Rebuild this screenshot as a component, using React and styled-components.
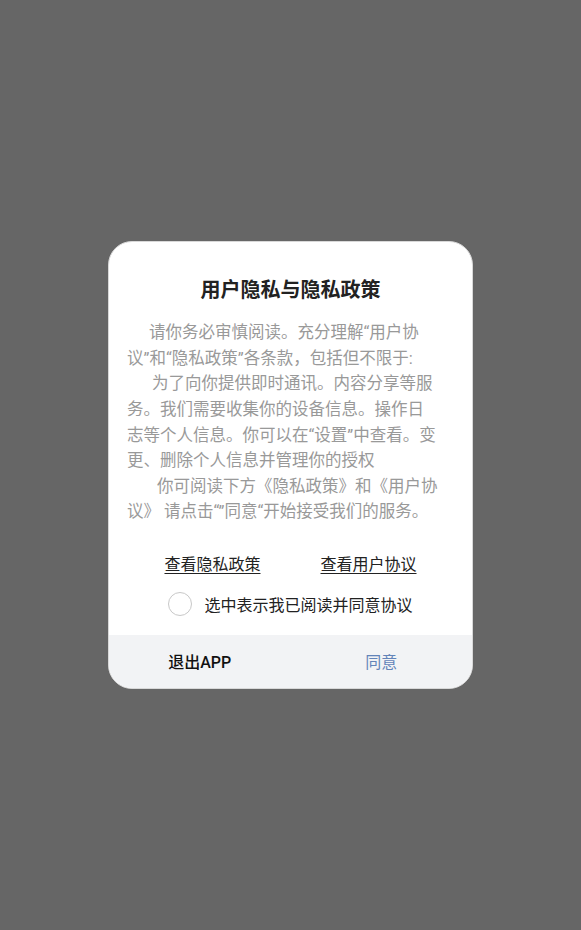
import React, { useState } from 'react'
import styled, { createGlobalStyle } from 'styled-components'

const GlobalStyle = createGlobalStyle`
  html, body {
    margin: 0;
    padding: 0;
    height: 100%;
    background: #666666;
    font-family: Roboto, 'Noto Sans CJK SC', sans-serif;
  }
  #root {
    height: 100%;
  }
`

const Overlay = styled.div`
  height: 100vh;
  display: flex;
  align-items: center;
  justify-content: center;
`

const Dialog = styled.div`
  width: 365px;
  background: #ffffff;
  border-radius: 24px;
  border: 1px solid #d8d8d8;
  box-sizing: border-box;
  overflow: hidden;
  display: flex;
  flex-direction: column;
`

const Title = styled.h2`
  margin: 35px 0 0;
  font-size: 20px;
  line-height: 26px;
  font-weight: 700;
  color: #222222;
  text-align: center;
`

const Body = styled.div`
  margin-top: 17px;
  padding: 0 18px;
  font-size: 16.5px;
  line-height: 25.6px;
  color: #999999;
  white-space: nowrap;
`

const Paragraph = styled.p`
  margin: 0;
  padding-left: ${(p) => p.$indent}px;
  span {
    display: block;
    margin-left: -${(p) => p.$indent}px;
  }
`

const Links = styled.div`
  margin-top: 29px;
  display: flex;
  justify-content: center;
  gap: 60px;
`

const LinkText = styled.a`
  font-size: 16px;
  line-height: 22px;
  color: #222222;
  text-decoration: underline;
  text-underline-offset: 3px;
  text-decoration-thickness: 1px;
  cursor: pointer;
`

const CheckRow = styled.label`
  margin: 16px 0 19px;
  display: flex;
  align-items: center;
  justify-content: center;
  gap: 12px;
  font-size: 16px;
  color: #222222;
  cursor: pointer;
`

const Circle = styled.span`
  width: 24px;
  height: 24px;
  box-sizing: border-box;
  border-radius: 50%;
  border: 1px solid ${(p) => (p.$checked ? '#5f7fb6' : '#c8c8c8')};
  background: ${(p) => (p.$checked ? '#5f7fb6' : '#ffffff')};
`

const Footer = styled.div`
  display: flex;
  height: 53px;
  background: #f2f3f5;
`

const FooterBtn = styled.button`
  flex: 1;
  border: none;
  background: transparent;
  font-family: inherit;
  font-size: 16px;
  font-weight: ${(p) => (p.$primary ? 400 : 500)};
  color: ${(p) => (p.$primary ? '#6384b9' : '#111111')};
  cursor: pointer;
`

const App = () => {
  const [checked, setChecked] = useState(false)

  return (
    <>
      <GlobalStyle />
      <Overlay>
        <Dialog>
          <Title>用户隐私与隐私政策</Title>
          <Body>
            <Paragraph $indent={22}>
              请你务必审慎阅读。充分理解“用户协
              <span>议”和“隐私政策”各条款，包括但不限于:</span>
            </Paragraph>
            <Paragraph $indent={25}>
              为了向你提供即时通讯。内容分享等服
              <span>务。我们需要收集你的设备信息。操作日</span>
              <span>志等个人信息。你可以在“设置”中查看。变</span>
              <span>更、删除个人信息并管理你的授权</span>
            </Paragraph>
            <Paragraph $indent={30}>
              你可阅读下方《隐私政策》和《用户协
              <span>议》 请点击“”同意“开始接受我们的服务。</span>
            </Paragraph>
          </Body>
          <Links>
            <LinkText>查看隐私政策</LinkText>
            <LinkText>查看用户协议</LinkText>
          </Links>
          <CheckRow onClick={() => setChecked(!checked)}>
            <Circle $checked={checked} />
            选中表示我已阅读并同意协议
          </CheckRow>
          <Footer>
            <FooterBtn>退出APP</FooterBtn>
            <FooterBtn $primary>同意</FooterBtn>
          </Footer>
        </Dialog>
      </Overlay>
    </>
  )
}

export default App
